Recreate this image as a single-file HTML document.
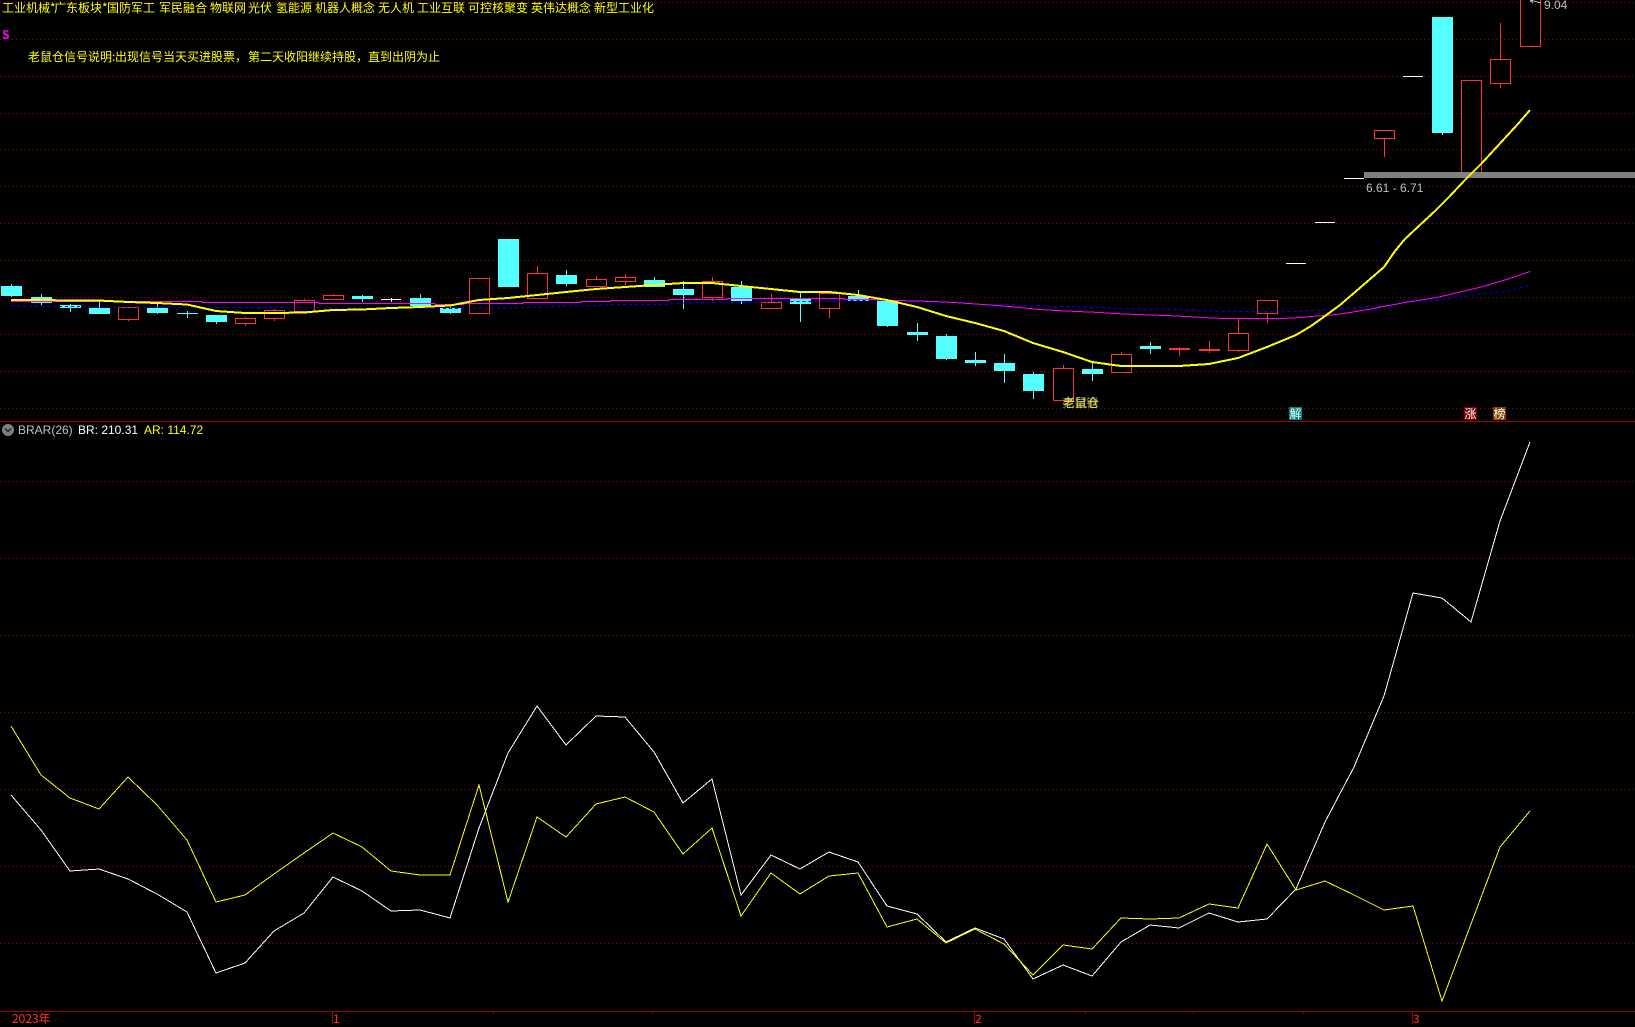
<!DOCTYPE html>
<html><head><meta charset="utf-8"><style>
html,body{margin:0;padding:0;background:#000;width:1635px;height:1024px;overflow:hidden}
svg{position:absolute;left:0;top:0}
.t{position:absolute;white-space:nowrap;font:12px/16px "WenQuanYi Zen Hei","Noto Sans CJK SC","Liberation Sans",sans-serif;color:#ff0;-webkit-font-smoothing:none;font-smooth:never}
.l{position:absolute;white-space:nowrap;font:12px/14px "Liberation Sans",sans-serif}
.b{position:absolute;width:13px;height:13px;color:#fff;font:12px/13px "WenQuanYi Zen Hei","Noto Sans CJK SC",sans-serif;text-align:center;top:407px}
</style></head><body>
<svg width="1635" height="1024" viewBox="0 0 1635 1024" shape-rendering="crispEdges" fill="none">
<g stroke="#a00000" stroke-dasharray="1 3">
<path d="M0 2.5H1635M0 39.5H1635M0 76.5H1635M0 113.5H1635M0 149.5H1635M0 186.5H1635M0 223.5H1635M0 260.5H1635M0 297.5H1635M0 334.5H1635M0 371.5H1635M0 408.5H1635"/>
<path d="M0 481.5H1635M0 558.5H1635M0 635.5H1635M0 712.5H1635M0 789.5H1635M0 866.5H1635M0 943.5H1635"/>
</g>
<path stroke="#a00000" d="M0 421.5H1635M0 1011.5H1635M332.5 1011V1024M974.5 1011V1024M1412.5 1011V1024M493.5 1011V1014M652.5 1011V1014M1085.5 1011V1014M1193.5 1011V1014M1303.5 1011V1014"/>
<!-- cyan wicks -->
<path stroke="#54ffff" d="M11.5 284V297M41.5 294V305M70.5 304V312M99.5 302V314M157.5 304V314M187.5 311V318M216.5 315V324M362.5 295V302M420.5 294V306M450.5 307V314M566.5 270V286M654.5 277V287M683.5 281V309M741.5 281V304M800.5 292V322M858.5 290V301M887.5 301V327M917.5 323V341M946.5 334V360M975.5 352V366M1004.5 354V383M1033.5 372V399M1092.5 362V381M1150.5 342V354M1442.5 17V135"/>
<!-- cyan bodies -->
<path fill="#54ffff" d="M1 286h21v10H1zM31 297h21v6H31zM60 305h21v3H60zM89 308h21v6H89zM147 308h21v5H147zM177 313h21v1H177zM206 315h21v7H206zM352 296h21v3H352zM410 298h21v8H410zM440 308h21v5H440zM498 239h21v48H498zM556 275h21v9H556zM644 280h21v7H644zM673 289h21v6H673zM731 287h21v14H731zM790 299h21v5H790zM848 296h21v5H848zM877 301h21v25H877zM907 332h21v3H907zM936 336h21v23H936zM965 360h21v3H965zM994 363h21v8H994zM1023 374h21v17H1023zM1082 369h21v5H1082zM1140 346h21v3H1140zM1432 17h21v116H1432z"/>
<!-- red wicks -->
<path stroke="#ff3232" d="M128.5 319V321M245.5 317V326M274.5 309V321M304.5 299V311M333.5 294V300M479.5 313V314M537.5 266V273M596.5 276V287M625.5 274V285M712.5 277V301M771.5 294V302M829.5 308V318M1063.5 365V368M1121.5 352V354M1179.5 347V356M1209.5 341V353M1238.5 318V352M1267.5 313V323M1384.5 138V157M1500.5 23V88"/>
<!-- red bodies -->
<g fill="#000" stroke="#ff3232">
<rect x="118.5" y="307.5" width="20" height="12"/><rect x="235.5" y="318.5" width="20" height="5"/><rect x="264.5" y="310.5" width="20" height="8"/><rect x="294.5" y="300.5" width="20" height="11"/><rect x="323.5" y="295.5" width="20" height="4"/><rect x="469.5" y="278.5" width="20" height="35"/><rect x="527.5" y="273.5" width="20" height="25"/><rect x="586.5" y="279.5" width="20" height="7"/><rect x="615.5" y="277.5" width="20" height="4"/><rect x="702.5" y="281.5" width="20" height="16"/><rect x="761.5" y="302.5" width="20" height="6"/><rect x="819.5" y="293.5" width="20" height="15"/><rect x="1053.5" y="368.5" width="20" height="32"/><rect x="1111.5" y="354.5" width="20" height="18"/><rect x="1228.5" y="333.5" width="20" height="17"/><rect x="1257.5" y="300.5" width="20" height="13"/><rect x="1374.5" y="130.5" width="20" height="8"/><rect x="1461.5" y="80.5" width="20" height="92"/><rect x="1490.5" y="59.5" width="20" height="24"/><rect x="1520.5" y="-2.5" width="20" height="49"/>
</g>
<path fill="#ff3232" d="M1169 348h21v2h-21zM1199 349h21v2h-21z"/>
<!-- white doji -->
<path stroke="#fff" d="M381 299.5H401M391.5 298V302M1286 263.5H1306M1315 222.5H1335M1344 178.5H1364M1403 76.5H1423"/>
<path fill="#808080" d="M1364 172h271v6H1364z"/>
<path stroke="#c0c0c0" d="M1530 0L1541 3M1530 0.5L1533 3"/>
<!-- blue -->
<polyline stroke="#0000ff" stroke-dasharray="3 3" points="11,305.5 36,306.5 250,307.5 464,308.5 525,307.5 557,306.5 594,305.5 611,304.5 669,304.5 672,303.5 701,302.5 754,302.5 772,301.5 844,301.5 851,300.5 901,300.5 904,301.5 929,301.5 933,302.5 961,302.5 965,303.5 986,304.5 1015,304.5 1019,305.5 1047,305.5 1051,306.5 1076,306.5 1079,307.5 1107,307.5 1111,308.5 1136,308.5 1139,309.5 1193,309.5 1196,310.5 1225,311.5 1300,311.5 1307,310.5 1321,310.5 1325,309.5 1336,309.5 1339,308.5 1354,307.5 1361,307.5 1364,306.5 1389,306.5 1400,303.5 1407,301.5 1439,300.5 1457,297.5 1482,293.5 1507,291.5 1521,287.5 1530,285.5"/>
<!-- magenta -->
<polyline stroke="#ff00ff" points="11,301.5 202,301.5 202,302.5 319,302.5 319,303.5 435,303.5 435,304.5 464,304.5 464,303.5 523,303.5 523,302.5 581,302.5 581,301.5 610,301.5 610,300.5 669,300.5 669,299.5 727,299.5 727,298.5 844,298.5 844,299.5 870,299.5 897,300.5 933,301.5 954,302.5 969,303.5 997,305.5 1009,306.5 1019,307.5 1029,308.5 1040,309.5 1056,310.5 1077,311.5 1100,312.5 1114,313.5 1136,314.5 1165,315.5 1187,316.5 1202,317.5 1224,318.5 1282,318.5 1301,317.5 1311,316.5 1325,315.5 1336,314.5 1350,312.5 1371,309 1386,306 1402,303 1421,300 1439,297 1460,292 1481,287 1505,280 1530,271.5"/>
<!-- yellow MA -->
<polyline stroke="#ffff00" stroke-width="2" points="11,300 41,300 70,300.5 99,300.5 128,302 157,303 187,304.5 216,311 245,313 274,313 304,312.5 333,310 362,309.5 391,308 420,307 450,305.5 479,300 508,298 537,295 566,292 596,289 625,287 654,285 683,283 712,283 741,286 771,289 800,292 829,292 858,295 887,300 917,307 946,316 975,323 1004,331 1033,343 1063,352 1092,362 1121,366 1150,366 1179,366 1209,364 1238,358 1267,347 1296,335 1311,326 1325,316 1340,305 1354,293 1369,280 1384,267 1395,251 1405,239 1421,224 1435,211 1449,197 1465,180 1482,163 1505,138 1517,125 1530,110"/>
<!-- BR -->
<polyline stroke="#ffffff" points="11,795 41,830 70,871 99,869 128,879 157,894 187,912 216,973 245,963 274,931 304,913 333,877 362,891 391,911 420,910 450,918 479,828 508,753 537,706 566,745 596,716 625,717 654,752 683,803 712,779 741,895 771,855 800,869 829,852 858,862 887,906 917,914 946,942 975,928 1004,939 1033,979 1063,965 1092,976 1121,942 1150,925 1179,928 1209,913 1238,922 1267,919 1296,889 1325,822 1354,767 1384,696 1413,593 1442,598 1471,622 1500,521 1530,442"/>
<!-- AR -->
<polyline stroke="#ffff00" points="11,726 41,775 70,798 99,809 128,777 157,805 187,840 216,902 245,895 274,874 304,853 333,833 362,847 391,871 420,875 450,875 479,785 508,902 537,817 566,837 596,804 625,797 654,812 683,854 712,828 741,916 771,873 800,894 829,876 858,873 887,927 917,919 946,943 975,929 1004,944 1033,975 1063,945 1092,949 1121,918 1150,919 1179,918 1209,904 1238,908 1267,844 1296,890 1325,881 1354,895 1384,910 1413,906 1442,1001 1471,924 1500,847 1530,811"/>
<circle cx="8" cy="430" r="6" fill="#808080"/>
<path d="M5 428.5L8 431.5L11 428.5" stroke="#222" stroke-width="1.5" shape-rendering="geometricPrecision"/>
</svg>

<div class="t" style="left:2px;top:0">工业机械</div><div class="t" style="left:50px;top:0">*</div>
<div class="t" style="left:54px;top:0">广东板块</div><div class="t" style="left:102px;top:0">*</div>
<div class="t" style="left:107px;top:0">国防军工</div>
<div class="t" style="left:159px;top:0">军民融合</div>
<div class="t" style="left:210px;top:0">物联网</div>
<div class="t" style="left:248px;top:0">光伏</div>
<div class="t" style="left:276px;top:0">氢能源</div>
<div class="t" style="left:315px;top:0">机器人概念</div>
<div class="t" style="left:378px;top:0">无人机</div>
<div class="t" style="left:417px;top:0">工业互联</div>
<div class="t" style="left:468px;top:0">可控核聚变</div>
<div class="t" style="left:531px;top:0">英伟达概念</div>
<div class="t" style="left:594px;top:0">新型工业化</div>
<div class="t" style="left:2px;top:27px;color:#f0f;font-weight:bold">S</div>
<div class="t" style="left:28px;top:49px">老鼠仓信号说明</div><div class="t" style="left:112px;top:49px">:</div>
<div class="t" style="left:115px;top:49px">出现信号当天买进股票，</div>
<div class="t" style="left:248px;top:49px">第二天收阳继续持股，</div>
<div class="t" style="left:368px;top:49px">直到出阴为止</div>
<div class="t" style="left:1063px;top:395px;color:#ff0">老鼠仓</div>
<div class="t" style="left:1062px;top:395px;color:#c0c0c0;opacity:.65">亮鼠钢</div>
<div class="b" style="left:1289px;background:#008080">解</div>
<div class="b" style="left:1464px;background:#800000">涨</div>
<div class="b" style="left:1493px;background:#804000">榜</div>
<div class="l" style="left:18px;top:423px;color:#c0c0c0">BRAR(26)</div>
<div class="l" style="left:78px;top:423px;color:#fff">BR: 210.31</div>
<div class="l" style="left:144px;top:423px;color:#ff0">AR: 114.72</div>
<div class="l" style="left:1366px;top:181px;color:#c0c0c0">6.61 - 6.71</div>
<div class="l" style="left:1544px;top:-2px;color:#c0c0c0">9.04</div>
<div class="t" style="left:12px;top:1011px;color:#ff3232">2023年</div>
<div class="t" style="left:333px;top:1011px;color:#ff3232">1</div>
<div class="t" style="left:975px;top:1011px;color:#ff3232">2</div>
<div class="t" style="left:1413px;top:1011px;color:#ff3232">3</div>
</body></html>
